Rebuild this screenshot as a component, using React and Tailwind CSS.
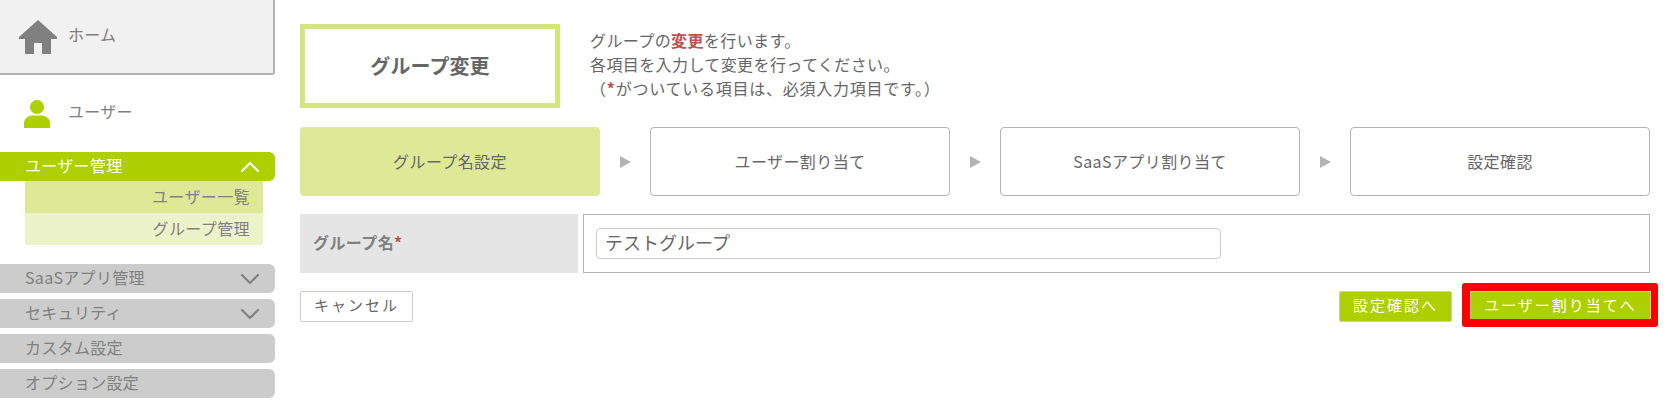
import React from "react";
import { ChevronUp, ChevronDown } from "lucide-react";

const font = "font-['Noto_Sans_CJK_JP','Liberation_Sans',sans-serif]";

function HomeIcon() {
  return (
    <svg width="38" height="34" viewBox="0 0 38 34" className="shrink-0">
      <path d="M19 0 L38 17 L38 19 L32 19 L32 34 L23 34 L23 23 L15 23 L15 34 L6 34 L6 19 L0 19 L0 17 Z" fill="#808080" />
    </svg>
  );
}

function UserIcon() {
  return (
    <svg width="26" height="28" viewBox="0 0 26 28" className="shrink-0">
      <circle cx="13" cy="7" r="7" fill="#aecf00" />
      <path d="M0 28 L0 23 C0 18 5 15.500 9 15.500 L17 15.500 C21 15.500 26 18 26 23 L26 28 Z" fill="#aecf00" />
    </svg>
  );
}

function MenuBar({ label, closed }) {
  return (
    <div className="h-[29px] bg-[#cccccc] rounded-r-[6px] flex items-center justify-between pl-[25px] pr-[9px] text-[16px] tracking-[0.3px] text-[#808080]">
      <span className="mb-[4px]">{label}</span>
      {closed && <ChevronDown size={32} strokeWidth={1.6} className="shrink-0 text-[#808080]" />}
    </div>
  );
}

function Step({ label, active }) {
  return (
    <div
      className={`w-[300px] h-[69px] pb-[2px] rounded-[4px] flex items-center justify-center text-[16px] tracking-[0.4px] text-[#666666] ${
        active ? "bg-[#dee998]" : "border border-[#b3b3b3] bg-white"
      }`}
    >
      {label}
    </div>
  );
}

function Arrow() {
  return <div className="w-0 h-0 border-y-[6px] border-y-transparent border-l-[11px] border-l-[#b3b3b3]" />;
}

function App() {
  return (
    <div className={`w-[1680px] h-[405px] bg-white flex overflow-hidden ${font}`}>
      <aside className="w-[275px] shrink-0">
        <div className="h-[75px] bg-[#f1f1f1] border-r-[2px] border-b-[2px] border-[#b3b3b3] rounded-br-[3px] flex items-center gap-[11px] pl-[19px] text-[16px] tracking-[0.3px] text-[#808080]">
          <HomeIcon />
          <span className="mb-[6px]">ホーム</span>
        </div>
        <div className="h-[77px] flex items-center gap-[18px] pl-[24px] text-[16px] tracking-[0.3px] text-[#808080]">
          <UserIcon />
          <span className="mb-[6px]">ユーザー</span>
        </div>
        <div className="h-[29px] bg-[#aecf00] rounded-r-[6px] flex items-center justify-between pl-[25px] pr-[9px] text-[16px] tracking-[0.3px] text-white">
          <span className="mb-[4px]">ユーザー管理</span>
          <ChevronUp size={32} strokeWidth={1.6} className="shrink-0" />
        </div>
        <div className="ml-[25px] w-[238px] text-[16px] tracking-[0.4px] text-[#808080]">
          <div className="h-[32px] bg-[#dee998] pr-[13px] pb-[3px] flex items-center justify-end">ユーザー一覧</div>
          <div className="h-[32px] bg-[#ecf3c9] pr-[13px] pb-[3px] flex items-center justify-end">グループ管理</div>
        </div>
        <div className="mt-[19px] flex flex-col gap-[6px]">
          <MenuBar label="SaaSアプリ管理" closed />
          <MenuBar label="セキュリティ" closed />
          <MenuBar label="カスタム設定" />
          <MenuBar label="オプション設定" />
        </div>
      </aside>

      <main className="pl-[25px] w-[1380px]">
        <div className="mt-[24px] flex items-start">
          <div className="w-[260px] h-[84px] border-[5px] border-[#d4e57e] flex items-center justify-center text-[20px] tracking-[0.1px] font-bold text-[#666666]">
            グループ変更
          </div>
          <div className="ml-[30px] mt-[4px] text-[16px] leading-[24px] tracking-[0.4px] text-[#666666]">
            <p>
              グループの<span className="font-bold text-[#bf5050]">変更</span>を行います。
            </p>
            <p>各項目を入力して変更を行ってください。</p>
            <p className="tracking-[0.75px]">
              （<span className="font-bold text-[#bf5050]">*</span>がついている項目は、必須入力項目です。）
            </p>
          </div>
        </div>

        <div className="mt-[19px] w-[1350px] flex items-center justify-between">
          <Step label="グループ名設定" active />
          <Arrow />
          <Step label="ユーザー割り当て" />
          <Arrow />
          <Step label="SaaSアプリ割り当て" />
          <Arrow />
          <Step label="設定確認" />
        </div>

        <div className="mt-[18px] w-[1350px] h-[59px] flex gap-[5px]">
          <div className="w-[278px] bg-[#e5e5e5] flex items-center pl-[13px] pb-[3px] text-[16px] tracking-[0.4px] font-bold text-[#808080]">
            グループ名<span className="text-[#bf5050]">*</span>
          </div>
          <div className="flex-1 border border-[#b3b3b3] flex items-center pl-[12px]">
            <input
              readOnly
              value="テストグループ"
              className="w-[625px] h-[31px] border border-[#cccccc] rounded-[4px] px-[8px] pb-[4px] text-[18px] text-[#666666] outline-none"
            />
          </div>
        </div>

        <div className="mt-[18px] w-[1351px] flex items-start justify-between">
          <button className="w-[113px] h-[31px] pb-[2px] border border-[#cccccc] rounded-[2px] bg-white text-[15px] tracking-[2px] text-[#666666]">
            キャンセル
          </button>
          <div className="flex gap-[18px]">
            <button className="w-[113px] h-[31px] pb-[2px] border border-[#cccccc] rounded-[2px] bg-[#aecf00] text-[15px] tracking-[2px] text-white">
              設定確認へ
            </button>
            <div className="relative">
              <button className="w-[181px] h-[31px] pb-[2px] border border-[#cccccc] bg-[#aecf00] text-[15px] tracking-[2px] text-white">
                ユーザー割り当てへ
              </button>
              {/* red highlight frame drawn over the button */}
              <div className="absolute -top-[8px] -left-[8px] -right-[7px] -bottom-[5px] border-t-[8px] border-l-[8px] border-r-[7px] border-b-[8px] border-[#ff0000] rounded-[3px] pointer-events-none" />
            </div>
          </div>
        </div>
      </main>
    </div>
  );
}

export default App;
